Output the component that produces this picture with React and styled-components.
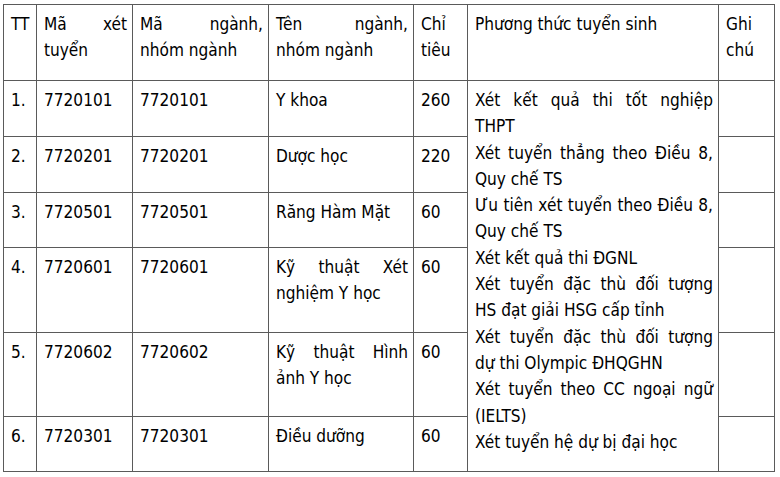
import styled, { createGlobalStyle } from "styled-components";

const GlobalStyle = createGlobalStyle`
	html, body {
		margin: 0;
		padding: 0;
		background: #ffffff;
	}
	body {
		font-family: "DejaVu Sans Condensed", "DejaVu Sans", sans-serif;
		font-stretch: semi-condensed;
		color: #000000;
	}
`;

const Page = styled.div`
	padding: 4px 0 0 3px;
`;

const Table = styled.table`
	border-collapse: collapse;
	table-layout: fixed;
	width: 772px;
	border: 1px solid #5a5a5a;
	font-size: 17.1px;
	line-height: 26.3px;
`;

const Row = styled.tr`
	height: ${(p) => p.$h}px;
`;

const Cell = styled.td`
	border: 1px solid #5a5a5a;
	padding: 6px 5px 0 7px;
	vertical-align: top;
	text-align: justify;
	overflow: hidden;
`;

const Para = styled.p`
	margin: 0;
	text-align: justify;
`;

const columns = [33, 96, 136, 145, 54, 251, 56];

const rows = [
	{ tt: "1.", ma: "7720101", nganh: "7720101", ten: "Y khoa", ct: "260", h: 56 },
	{ tt: "2.", ma: "7720201", nganh: "7720201", ten: "Dược học", ct: "220", h: 56 },
	{ tt: "3.", ma: "7720501", nganh: "7720501", ten: "Răng Hàm Mặt", ct: "60", h: 55 },
	{ tt: "4.", ma: "7720601", nganh: "7720601", ten: "Kỹ thuật Xét nghiệm Y học", ct: "60", h: 85 },
	{ tt: "5.", ma: "7720602", nganh: "7720602", ten: "Kỹ thuật Hình ảnh Y học", ct: "60", h: 84 },
	{ tt: "6.", ma: "7720301", nganh: "7720301", ten: "Điều dưỡng", ct: "60", h: 55 },
];

const methods = [
	"Xét kết quả thi tốt nghiệp THPT",
	"Xét tuyển thẳng theo Điều 8, Quy chế TS",
	"Ưu tiên xét tuyển theo Điều 8, Quy chế TS",
	"Xét kết quả thi ĐGNL",
	"Xét tuyển đặc thù đối tượng HS đạt giải HSG cấp tỉnh",
	"Xét tuyển đặc thù đối tượng dự thi Olympic ĐHQGHN",
	"Xét tuyển theo CC ngoại ngữ (IELTS)",
	"Xét tuyển hệ dự bị đại học",
];

export default function App() {
	return (
		<>
			<GlobalStyle />
			<Page>
				<Table>
					<colgroup>
						{columns.map((w, i) => (
							<col key={i} style={{ width: w }} />
						))}
					</colgroup>
					<tbody>
						<Row $h={76}>
							<Cell>TT</Cell>
							<Cell>Mã xét tuyển</Cell>
							<Cell>Mã ngành, nhóm ngành</Cell>
							<Cell>Tên ngành, nhóm ngành</Cell>
							<Cell>Chỉ tiêu</Cell>
							<Cell>Phương thức tuyển sinh</Cell>
							<Cell>Ghi chú</Cell>
						</Row>
						{rows.map((r, i) => (
							<Row $h={r.h} key={r.tt}>
								<Cell>{r.tt}</Cell>
								<Cell>{r.ma}</Cell>
								<Cell>{r.nganh}</Cell>
								<Cell>{r.ten}</Cell>
								<Cell>{r.ct}</Cell>
								{i === 0 && (
									<Cell rowSpan={rows.length}>
										{methods.map((m) => (
											<Para key={m}>{m}</Para>
										))}
									</Cell>
								)}
								<Cell />
							</Row>
						))}
					</tbody>
				</Table>
			</Page>
		</>
	);
}
